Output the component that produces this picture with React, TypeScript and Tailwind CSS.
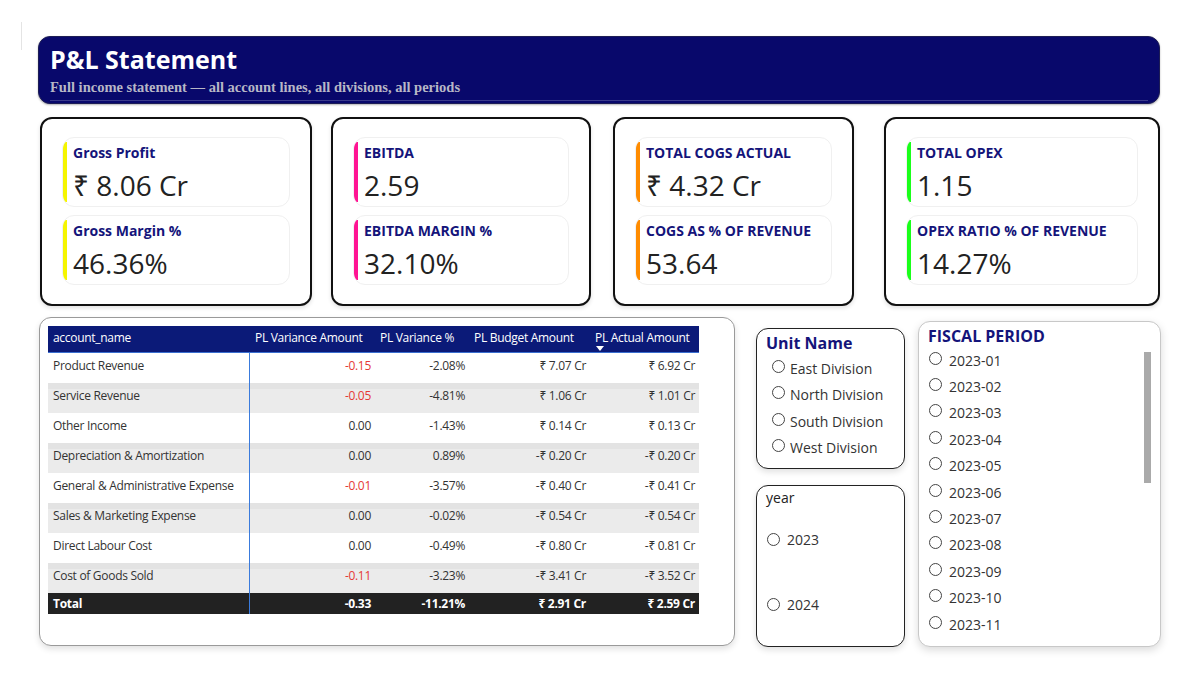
import React from 'react';

const font = { fontFamily: '"Open Sans", "Noto Sans", "DejaVu Sans", sans-serif' };

type Kpi = { title: string; value: string };

const cards: { w: string; ml: string; accent: string; items: Kpi[] }[] = [
  { w: 'w-[272px]', ml: 'ml-[40px]', accent: 'bg-[#f5f500]', items: [{ title: 'Gross Profit', value: '₹ 8.06 Cr' }, { title: 'Gross Margin %', value: '46.36%' }] },
  { w: 'w-[260px]', ml: 'ml-[19px]', accent: 'bg-[#ff1493]', items: [{ title: 'EBITDA', value: '2.59' }, { title: 'EBITDA MARGIN %', value: '32.10%' }] },
  { w: 'w-[241px]', ml: 'ml-[22px]', accent: 'bg-[#ff8c00]', items: [{ title: 'TOTAL COGS ACTUAL', value: '₹ 4.32 Cr' }, { title: 'COGS AS % OF REVENUE', value: '53.64' }] },
  { w: 'w-[276px]', ml: 'ml-[30px]', accent: 'bg-[#1aff1a]', items: [{ title: 'TOTAL OPEX', value: '1.15' }, { title: 'OPEX RATIO % OF REVENUE', value: '14.27%' }] },
];

const rows = [
  ['Product Revenue', '-0.15', '-2.08%', '₹ 7.07 Cr', '₹ 6.92 Cr'],
  ['Service Revenue', '-0.05', '-4.81%', '₹ 1.06 Cr', '₹ 1.01 Cr'],
  ['Other Income', '0.00', '-1.43%', '₹ 0.14 Cr', '₹ 0.13 Cr'],
  ['Depreciation & Amortization', '0.00', '0.89%', '-₹ 0.20 Cr', '-₹ 0.20 Cr'],
  ['General & Administrative Expense', '-0.01', '-3.57%', '-₹ 0.40 Cr', '-₹ 0.41 Cr'],
  ['Sales & Marketing Expense', '0.00', '-0.02%', '-₹ 0.54 Cr', '-₹ 0.54 Cr'],
  ['Direct Labour Cost', '0.00', '-0.49%', '-₹ 0.80 Cr', '-₹ 0.81 Cr'],
  ['Cost of Goods Sold', '-0.11', '-3.23%', '-₹ 3.41 Cr', '-₹ 3.52 Cr'],
];

const periods = ['2023-01', '2023-02', '2023-03', '2023-04', '2023-05', '2023-06', '2023-07', '2023-08', '2023-09', '2023-10', '2023-11'];

function Radio() {
  return <span className="inline-block w-[13px] h-[13px] rounded-full border border-[#444] bg-white shrink-0" />;
}

function KpiTile({ item, accent }: { item: Kpi; accent: string }) {
  return (
    <div className="relative h-[70px] rounded-[12px] border border-[#f0f0f0] bg-white overflow-hidden pl-[10px]">
      <div className={`absolute left-0 top-[4px] bottom-[4px] w-[4px] rounded-l-[3px] ${accent}`} />
      <div className="pt-[6px] text-[14px] font-bold text-[#14147a] leading-[18px]">{item.title}</div>
      <div className="mt-[7px] text-[28px] leading-[32px] text-[#222]">{item.value}</div>
    </div>
  );
}

export default function App() {
  return (
    <div className="relative w-[1200px] h-[675px] bg-white overflow-hidden" style={font}>
      <div className="absolute left-[21px] top-[22px] w-px h-[28px] bg-[#e4e4e4]" />

      {/* header */}
      <div className="pt-[36px] pl-[38px]">
        <div className="w-[1122px] h-[68px] rounded-[12px] bg-[#08086b] border border-[#1d1d55] px-[11px] pt-[6px] shadow-[0_1px_2px_rgba(0,0,0,0.3)]">
          <div className="text-[25px] font-bold text-white leading-[33px]">P&amp;L Statement</div>
          <div className="mt-[2px] text-[14.5px] font-bold text-[#b7b7c6] leading-[18px] border-b border-[#3a3a8a] pb-[4px]" style={{ fontFamily: '"Liberation Serif", serif' }}>
            Full income statement — all account lines, all divisions, all periods
          </div>
        </div>
      </div>

      {/* KPI cards */}
      <div className="flex mt-[13px]">
        {cards.map((c, i) => (
          <div key={i} className={`${c.w} ${c.ml} h-[189px] rounded-[12px] border-2 border-[#111] bg-white px-[20px] pt-[18px] flex flex-col gap-[8px] shadow-[0_2px_4px_rgba(0,0,0,0.12)]`}>
            {c.items.map((it, j) => <KpiTile key={j} item={it} accent={c.accent} />)}
          </div>
        ))}
      </div>

      {/* bottom */}
      <div className="flex mt-[13px]">
        {/* table */}
        <div className="ml-[39px] -mt-[2px] w-[696px] h-[329px] rounded-[12px] border border-[#9a9a9a] bg-white p-[8px] shadow-[0_3px_6px_rgba(0,0,0,0.12)] self-start">
          <div className="w-[651px] text-[12px] text-[#333] tracking-[-0.3px]">
            <div className="flex h-[27px] bg-[#0b1a78] text-white items-center border-b border-[#3a6fd0] pb-[3px]">
              <div className="w-[202px] pl-[5px]">account_name</div>
              <div className="w-[125px] pl-[5px]">PL Variance Amount</div>
              <div className="w-[94px] pl-[5px]">PL Variance %</div>
              <div className="w-[121px] pl-[5px]">PL Budget Amount</div>
              <div className="w-[109px] pl-[5px] relative">
                PL Actual Amount
                <svg className="absolute left-[6px] top-[17px]" width="8" height="5" viewBox="0 0 8 5"><path d="M0 0h8L4 5z" fill="#fff" /></svg>
              </div>
            </div>
            {rows.map((r, i) => (
              <div key={i} className={`flex h-[30px] ${i % 2 === 1 ? 'bg-[#ebebeb]' : 'bg-white'} ${i % 2 === 1 ? 'shadow-[inset_0_6px_0_#e3e3e3]' : ''}`}>
                <div className="w-[202px] pl-[5px] pt-[4px] border-r border-[#3a7bdc]">{r[0]}</div>
                <div className={`w-[125px] pr-[4px] pt-[4px] text-right ${r[1].startsWith('-') ? 'text-[#e53935]' : ''}`}>{r[1]}</div>
                <div className="w-[94px] pr-[4px] pt-[4px] text-right">{r[2]}</div>
                <div className="w-[121px] pr-[4px] pt-[4px] text-right">{r[3]}</div>
                <div className="w-[109px] pr-[4px] pt-[4px] text-right">{r[4]}</div>
              </div>
            ))}
            <div className="flex h-[21px] bg-[#222] text-white font-bold items-center">
              <div className="w-[202px] pl-[5px] h-full flex items-center border-r border-[#3a7bdc]">Total</div>
              <div className="w-[125px] pr-[4px] text-right">-0.33</div>
              <div className="w-[94px] pr-[4px] text-right">-11.21%</div>
              <div className="w-[121px] pr-[4px] text-right">₹ 2.91 Cr</div>
              <div className="w-[109px] pr-[4px] text-right">₹ 2.59 Cr</div>
            </div>
          </div>
        </div>

        {/* unit + year slicers */}
        <div className="ml-[21px] mt-[9px] w-[149px] flex flex-col gap-[16px]">
          <div className="h-[141px] rounded-[12px] border-[1.5px] border-[#222] bg-white pl-[9px] pt-[3px] shadow-[0_3px_6px_rgba(0,0,0,0.12)]">
            <div className="text-[16px] font-bold text-[#14147a] leading-[22px]">Unit Name</div>
            <div className="mt-[1px] flex flex-col">
              {['East Division', 'North Division', 'South Division', 'West Division'].map(d => (
                <div key={d} className="flex items-center h-[26.5px] pl-[6px] gap-[5px] text-[14px] text-[#333]">
                  <span className="-mt-[4px] flex"><Radio /></span>
                  <span>{d}</span>
                </div>
              ))}
            </div>
          </div>
          <div className="h-[162px] rounded-[12px] border-[1.5px] border-[#222] bg-white pl-[9px] pt-[2px] shadow-[0_3px_6px_rgba(0,0,0,0.12)]">
            <div className="text-[14px] text-[#222] leading-[20px]">year</div>
            <div className="mt-[21px] flex items-center gap-[7px] pl-[1px] text-[14px] text-[#333]"><Radio /><span>2023</span></div>
            <div className="mt-[44px] flex items-center gap-[7px] pl-[1px] text-[14px] text-[#333]"><Radio /><span>2024</span></div>
          </div>
        </div>

        {/* fiscal period */}
        <div className="ml-[13px] mt-[2px] w-[243px] h-[326px] rounded-[12px] border border-[#c8c8c8] bg-white pl-[9px] pt-[3px] shadow-[0_3px_8px_rgba(0,0,0,0.15)] relative">
          <div className="text-[16px] font-bold text-[#14147a] leading-[22px]">FISCAL PERIOD</div>
          <div className="flex flex-col">
            {periods.map(p => (
              <div key={p} className="flex items-center h-[26.4px] pl-[1px] gap-[7px] text-[14px] text-[#333]">
                <span className="-mt-[4px] flex"><Radio /></span>
                <span>{p}</span>
              </div>
            ))}
          </div>
          <div className="absolute left-[225px] top-[30px] w-[7px] h-[131px] bg-[#aaa]" />
        </div>
      </div>
    </div>
  );
}
